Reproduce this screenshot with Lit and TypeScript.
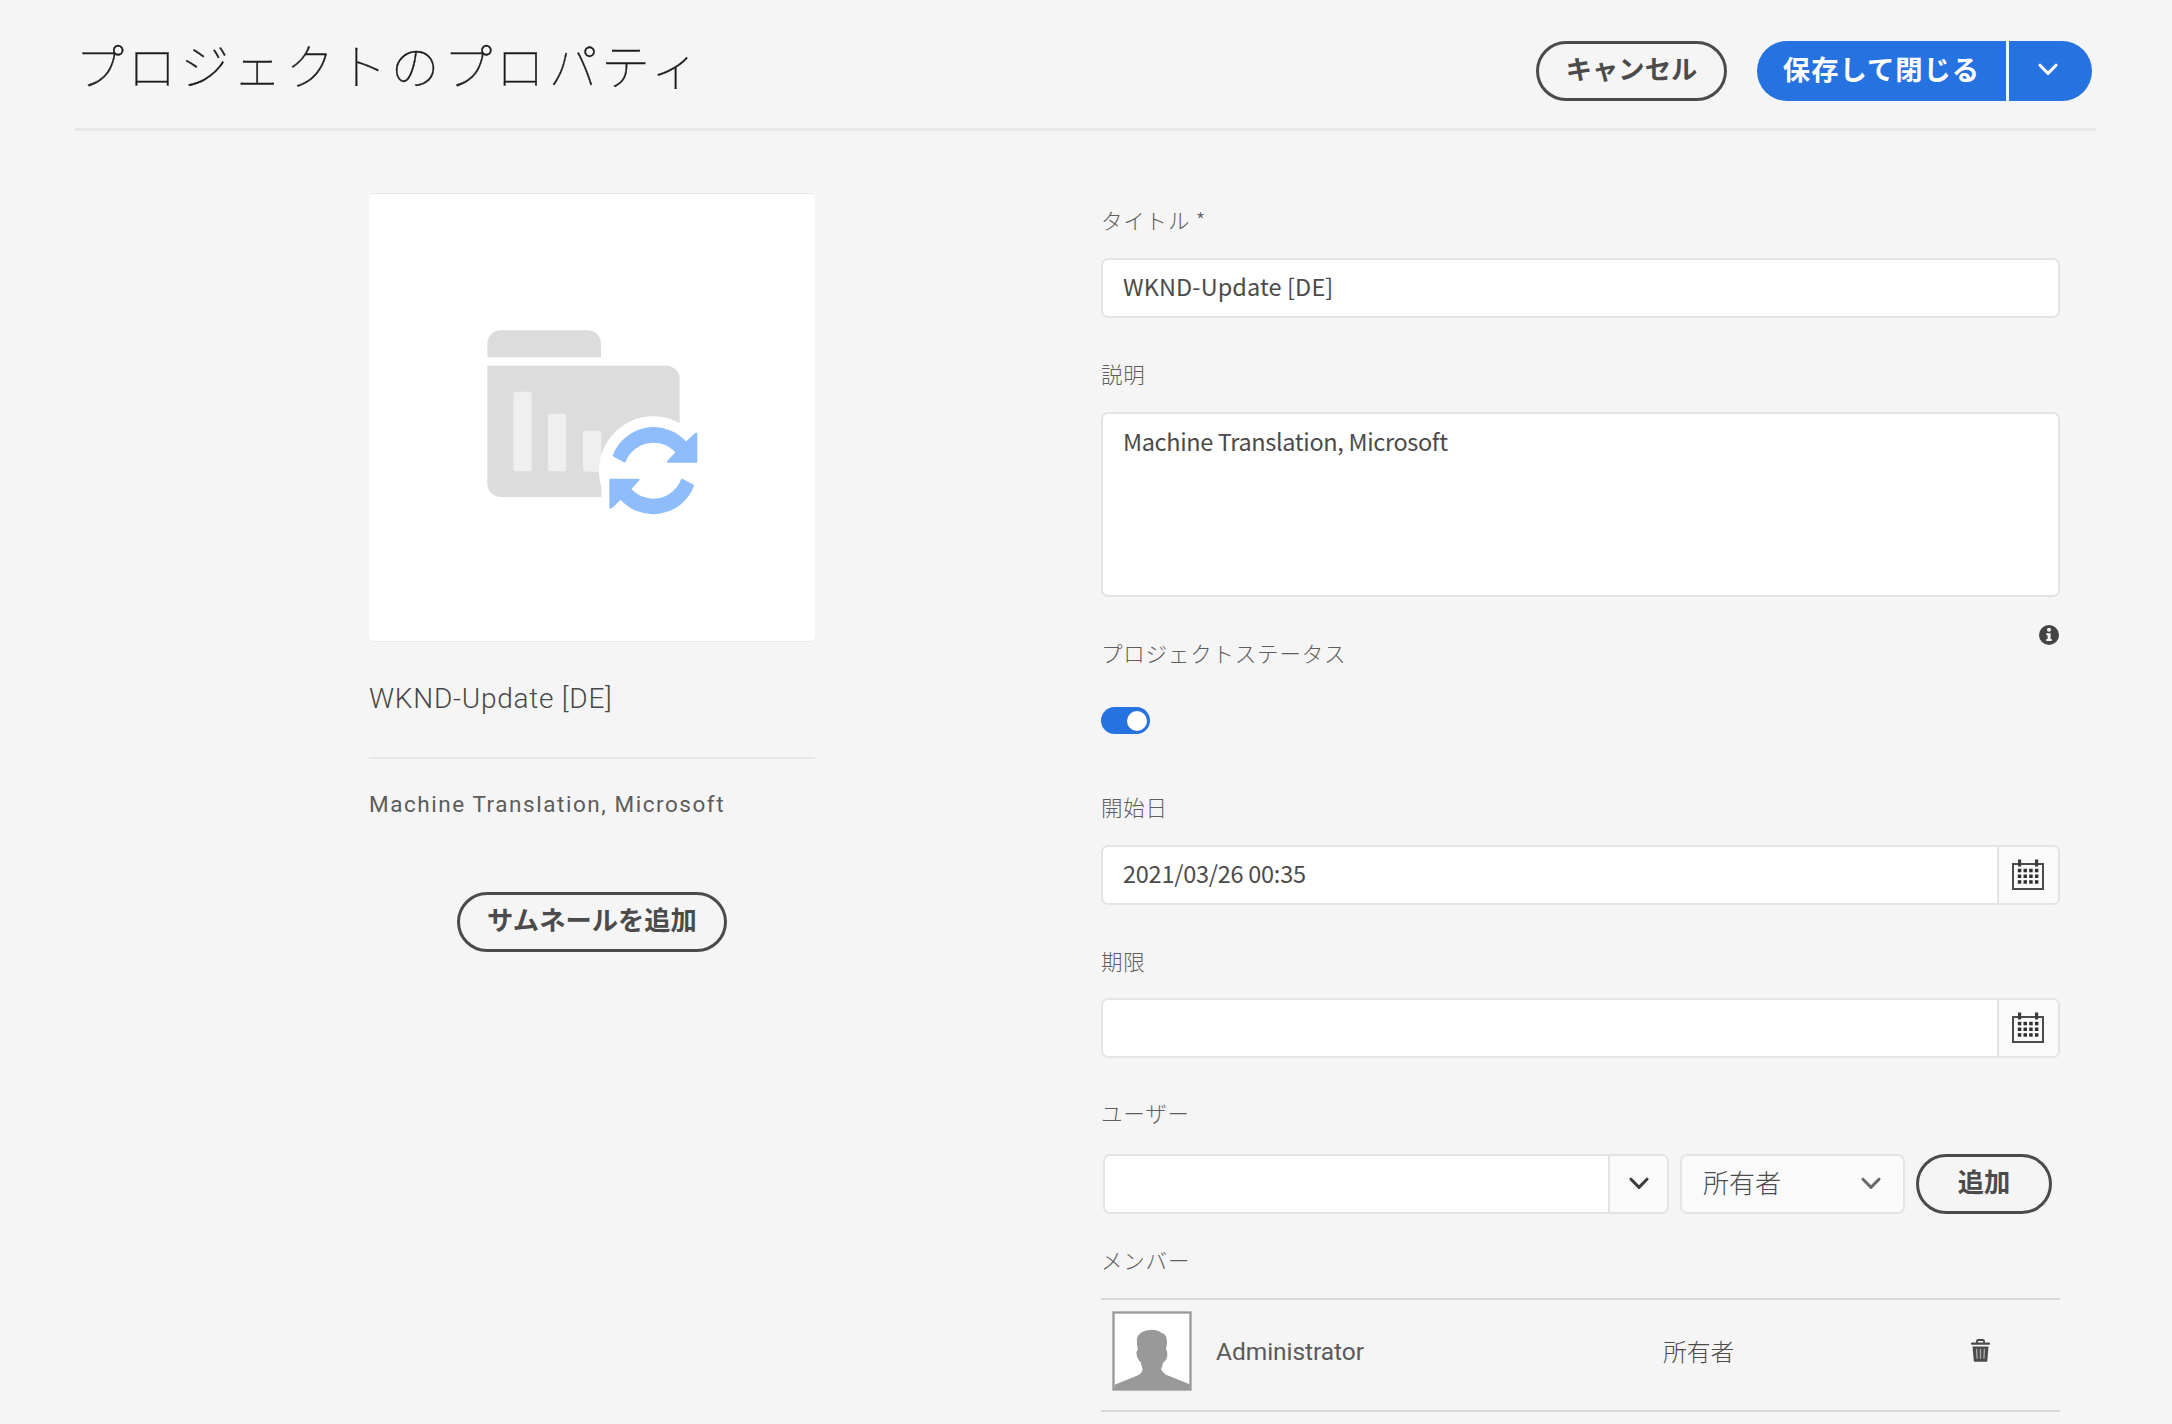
import { LitElement, html, css, svg } from "lit";
import { customElement, property } from "lit/decorators.js";

const calendarIcon = html`<svg class="cal" width="32" height="31" viewBox="0 0 32 31">
  <rect x="1" y="5" width="30" height="25" fill="none" stroke="#4b4b4b" stroke-width="2" />
  <rect x="6" y="0.5" width="3.2" height="7" fill="#3c3c3c" />
  <rect x="23" y="0.5" width="3.2" height="7" fill="#3c3c3c" />
  ${[9.8, 15.5, 21.2].map((y) =>
    [5.8, 11.5, 17.2, 22.9].map((x) => svg`<rect x=${x} y=${y} width="3.5" height="3.5" fill="#2f2f2f" />`)
  )}
</svg>`;

const chevron = (color: string) => html`<svg class="chev" width="20" height="14" viewBox="0 0 20 14">
  <path d="M2 2.2 L10 10.4 L18 2.2" fill="none" stroke=${color} stroke-width="3" stroke-linecap="round" stroke-linejoin="round" />
</svg>`;

@customElement("project-card")
export class ProjectCard extends LitElement {
  static styles = css`
    :host { display: block; width: 446px; font-family: Roboto, "Noto Sans CJK JP", sans-serif; color: #5c5c5c; }
    .thumb { display: block; box-sizing: border-box; width: 446px; height: 449px; background: #fff; border-top: 1.5px solid #e9e9e9; border-bottom: 1.5px solid #e9e9e9; border-radius: 5px; }
    .thumb svg { display: block; }
    .name { margin-top: 39px; height: 36px; line-height: 36px; font-size: 28px; font-weight: 300; letter-spacing: 0.75px; white-space: nowrap; color: #484848; }
    .rule { margin-top: 40px; height: 2px; background: #e8e8e8; }
    .desc { margin-top: 30px; height: 30px; line-height: 30px; font-size: 22.5px; letter-spacing: 1.55px; white-space: nowrap; }
  `;
  render() {
    return html`
      <div class="thumb">
        <svg width="446" height="446" viewBox="58 41 1338 1338">
          <path d="M413 531V490A40 40 0 0 1 453 450H714A40 40 0 0 1 754 490V531Z" fill="#dcdcdc" />
          <path d="M413 556H950A40 40 0 0 1 990 596V950H453A40 40 0 0 1 413 910Z" fill="#dcdcdc" />
          <rect x="491" y="634" width="55" height="239" rx="9" fill="#efefef" />
          <rect x="595" y="700" width="55" height="173" rx="9" fill="#efefef" />
          <rect x="700" y="751" width="55" height="123" rx="9" fill="#efefef" />
          <rect x="755" y="880" width="240" height="75" fill="#fff" />
          <circle cx="911" cy="871" r="163" fill="#fff" />
          <g fill="#8fbdfc" stroke="#8fbdfc" stroke-width="6" stroke-linejoin="round">
            <path d="M792 826A128 128 0 0 1 1009 788L1035 763L1040 760V844H955L981 816A92 92 0 0 0 825 844Z" />
            <path transform="rotate(180 911 871)" d="M792 826A128 128 0 0 1 1009 788L1035 763L1040 760V844H955L981 816A92 92 0 0 0 825 844Z" />
          </g>
        </svg>
      </div>
      <div class="name">WKND-Update [DE]</div>
      <div class="rule"></div>
      <div class="desc">Machine Translation, Microsoft</div>
    `;
  }
}

@customElement("date-field")
export class DateField extends LitElement {
  @property() value = "";
  static styles = css`
    :host { display: block; }
    .box { display: flex; box-sizing: border-box; height: 60px; border: 2px solid #e4e4e4; border-radius: 7px; background: #fff; overflow: hidden; }
    .value { flex: 1; padding-left: 20px; font: 400 23.5px/52px "Noto Sans CJK JP", sans-serif; color: #4b4b4b; letter-spacing: -0.25px; }
    .btn { width: 59px; border-left: 2px solid #e4e4e4; background: #fafafa; display: flex; align-items: center; justify-content: center; }
    .cal { display: block; margin: 0 1px 1px 0; }
  `;
  render() {
    return html`<div class="box"><div class="value">${this.value}</div><div class="btn">${calendarIcon}</div></div>`;
  }
}

@customElement("app-root")
export class AppRoot extends LitElement {
  static styles = css`
    :host { display: block; height: 1424px; overflow: hidden; background: #f5f5f5; font-family: "Noto Sans CJK JP", sans-serif; color: #4b4b4b; }
    * { box-sizing: border-box; }
    .header { display: flex; align-items: flex-start; height: 131px; margin: 0 76px 0 75px; border-bottom: 3px solid #e9e9e9; }
    .title { flex: 1; margin: 0; padding: 29px 0 0 0; font-size: 49px; line-height: 70px; font-weight: 100; letter-spacing: 3.6px; color: #1c1c1c; -webkit-text-stroke: 0.35px #1c1c1c; white-space: nowrap; }
    .pill { display: flex; align-items: center; justify-content: center; height: 60px; border: 3px solid #4b4b4b; border-radius: 30px; font-size: 26.3px; font-weight: 700; line-height: 36px; padding-bottom: 6px; white-space: nowrap; }
    .cancel { width: 191px; margin-top: 41px; }
    .save { display: flex; gap: 3px; margin: 41px 4px 0 30px; color: #fff; }
    .save-main { width: 249px; height: 60px; background: #2672e1; border-radius: 30px 0 0 30px; display: flex; align-items: center; justify-content: center; padding-bottom: 6px; font-size: 27.3px; font-weight: 700; letter-spacing: 1px; white-space: nowrap; }
    .save-more { width: 83px; height: 60px; background: #2672e1; border-radius: 0 30px 30px 0; display: flex; align-items: center; justify-content: center; padding: 0 5px 2px 0; }
    .body { display: flex; align-items: flex-start; }
    .side { width: 446px; margin: 62px 0 0 369px; display: flex; flex-direction: column; align-items: center; }
    .add-thumb { width: 270px; margin-top: 73px; }
    .form { width: 959px; margin: 74px 0 0 286px; display: flex; flex-direction: column; }
    .label { height: 30px; line-height: 30px; font-size: 21.5px; font-weight: 300; letter-spacing: 0.8px; color: #5e5e5e; white-space: nowrap; }
    .field { margin-top: 23px; }
    .gap { margin-top: 41px; }
    .input { height: 60px; border: 2px solid #e4e4e4; border-radius: 7px; background: #fff; padding-left: 20px; font-size: 23.5px; line-height: 53px; white-space: nowrap; letter-spacing: 0.1px; }
    .area { height: 185px; line-height: 55px; letter-spacing: -0.35px; }
    .status { margin-top: 28px; display: flex; justify-content: space-between; align-items: flex-start; }
    .status .label { margin-top: 13px; }
    .info { display: block; }
    .toggle { display: flex; justify-content: flex-end; align-items: center; width: 49px; height: 27px; margin-top: 39px; padding-right: 3.5px; border-radius: 14px; background: #2672e1; }
    .knob { width: 20px; height: 20px; border-radius: 50%; background: #fff; }
    .after-toggle { margin-top: 58px; }
    .due-field { margin-top: 22px; }
    .users-label { margin-top: 40px; }
    .users { display: flex; margin: 26px 0 0 2px; }
    .combo { display: flex; width: 566px; height: 60px; border: 2px solid #e4e4e4; border-radius: 7px; background: #fff; overflow: hidden; }
    .combo-text { flex: 1; }
    .combo-btn { width: 59px; border-left: 2px solid #e4e4e4; background: #fafafa; display: flex; align-items: center; justify-content: center; }
    .select { display: flex; align-items: center; justify-content: space-between; width: 225px; height: 60px; margin-left: 11px; padding: 0 22px 0 21px; border: 2px solid #e4e4e4; border-radius: 7px; background: #fafafa; }
    .select-text { font-size: 26px; line-height: 36px; font-weight: 300; padding-bottom: 5px; }
    .add { width: 136px; margin-left: 11px; }
    .members-label { margin-top: 31px; }
    .member { display: flex; align-items: center; height: 114px; margin-top: 23px; padding: 0 0 9px 11px; border-top: 2px solid #d8d8d8; border-bottom: 2px solid #d8d8d8; }
    .avatar { display: block; }
    .who { width: 447px; margin-left: 24px; font: 400 24.5px/34px Roboto, sans-serif; color: #5a5a5a; letter-spacing: -0.05px; padding-top: 3px; }
    .role { width: 308px; font-size: 23.8px; line-height: 34px; font-weight: 300; }
  `;

  render() {
    return html`
      <div class="header">
        <h1 class="title">プロジェクトのプロパティ</h1>
        <div class="pill cancel">キャンセル</div>
        <div class="save">
          <div class="save-main">保存して閉じる</div>
          <div class="save-more">${chevron("#fff")}</div>
        </div>
      </div>
      <div class="body">
        <div class="side">
          <project-card></project-card>
          <div class="pill add-thumb">サムネールを追加</div>
        </div>
        <div class="form">
          <div class="label">タイトル *</div>
          <div class="input field">WKND-Update [DE]</div>
          <div class="label gap">説明</div>
          <div class="input area field">Machine Translation, Microsoft</div>
          <div class="status">
            <div class="label">プロジェクトステータス</div>
            <svg class="info" width="22" height="20" viewBox="0 0 22 20">
              <circle cx="11" cy="10" r="10" fill="#444" />
              <circle cx="11" cy="4.7" r="2" fill="#f5f5f5" />
              <path d="M8.3 8.3H12.6V14H13.8V16H8.3V14H9.6V10.2H8.3Z" fill="#f5f5f5" />
            </svg>
          </div>
          <div class="toggle"><div class="knob"></div></div>
          <div class="label after-toggle">開始日</div>
          <date-field class="field" value="2021/03/26 00:35"></date-field>
          <div class="label gap">期限</div>
          <date-field class="due-field"></date-field>
          <div class="label users-label">ユーザー</div>
          <div class="users">
            <div class="combo">
              <div class="combo-text"></div>
              <div class="combo-btn">${chevron("#3c3c3c")}</div>
            </div>
            <div class="select"><span class="select-text">所有者</span>${chevron("#6a6a6a")}</div>
            <div class="pill add">追加</div>
          </div>
          <div class="label members-label">メンバー</div>
          <div class="member">
            <svg class="avatar" width="80" height="80" viewBox="96 241 240 240">
              <rect x="100.5" y="245.5" width="231" height="231" fill="#fff" stroke="#999" stroke-width="7" />
              <path d="M104 476V462L176 433Q188 424 188 416Q185 408 182 394Q171 386 169 366Q170 360 174 357Q169 343 171 323Q178 298 216 297Q236 298 243 306Q262 309 261 337L258 356Q264 364 261 380Q257 393 249 396Q248 406 243 416Q248 426 258 432L329 461V476Z" fill="#999" />
            </svg>
            <div class="who">Administrator</div>
            <div class="role">所有者</div>
            <svg width="19" height="23" viewBox="0 0 19 23">
              <path d="M6 4V1.8Q6 1 7 1H12Q13 1 13 1.8V4" fill="none" stroke="#4b4b4b" stroke-width="1.8" />
              <rect x="0" y="3.6" width="19" height="2.2" rx="0.8" fill="#4b4b4b" />
              <path d="M1.5 7.5H17.5L16.3 22Q16.2 22.8 15.4 22.8H3.8Q3 22.8 2.8 22Z" fill="#4b4b4b" />
              <path d="M5.6 9.8L6.1 19.8M9.5 9.8V19.8M13.4 9.8L12.9 19.8" stroke="#a9a9a9" stroke-width="1.4" />
            </svg>
          </div>
        </div>
      </div>
    `;
  }
}
